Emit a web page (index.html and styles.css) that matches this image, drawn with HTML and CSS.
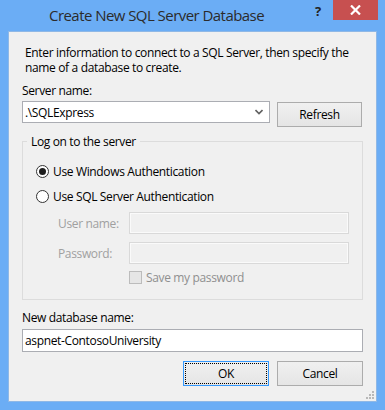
FILE: index.html
```
<!DOCTYPE html>
<html>
<head>
<meta charset="utf-8">
<link rel="stylesheet" href="styles.css">
</head>
<body>
<div class="window">
  <div class="titlebar">
    <div class="title">Create New SQL Server Database</div>
    <div class="help">?</div>
    <div class="close">
      <svg width="11" height="10" viewBox="0 0 11 10"><path d="M1 0.5 L10 9.5 M10 0.5 L1 9.5" stroke="#fff" stroke-width="2.2"/></svg>
    </div>
  </div>
  <div class="client">
    <p class="intro">Enter information to connect to a SQL Server, then specify the name of a database to create.</p>
    <div class="label">Server name:</div>
    <div class="server-row">
      <div class="combo">
        <span>.\SQLExpress</span>
        <svg class="arrow" width="8" height="6" viewBox="0 0 8 6"><path d="M0.5 1 L4 4.5 L7.5 1" fill="none" stroke="#606060" stroke-width="1.6"/></svg>
      </div>
      <div class="btn refresh">Refresh</div>
    </div>
    <fieldset class="group">
      <legend>Log on to the server</legend>
      <div class="radio-row first"><span class="radio checked"></span>Use Windows Authentication</div>
      <div class="radio-row"><span class="radio"></span>Use SQL Server Authentication</div>
      <div class="field-row user"><span class="flabel">User name:</span><span class="dinput"></span></div>
      <div class="field-row"><span class="flabel">Password:</span><span class="dinput"></span></div>
      <div class="check-row"><span class="check"></span>Save my password</div>
    </fieldset>
    <div class="label dblabel">New database name:</div>
    <div class="textbox">aspnet-ContosoUniversity</div>
    <div class="buttons">
      <div class="btn ok"><span class="focus">OK</span></div>
      <div class="btn cancel">Cancel</div>
    </div>
    <div class="grip">
      <svg width="10" height="10" viewBox="0 0 10 10" fill="#b8b8b8"><rect x="7" y="1" width="2" height="2"/><rect x="4" y="4" width="2" height="2"/><rect x="7" y="4" width="2" height="2"/><rect x="1" y="7" width="2" height="2"/><rect x="4" y="7" width="2" height="2"/><rect x="7" y="7" width="2" height="2"/></svg>
    </div>
  </div>
</div>
</body>
</html>
```
FILE: styles.css
```
* { box-sizing: border-box; }
html, body { margin: 0; padding: 0; }
body {
  font-family: "Open Sans", "Noto Sans", sans-serif;
  font-size: 12px;
  color: #000;
}
.window {
  width: 385px;
  height: 410px;
  background: #6badf5;
  display: flex;
  flex-direction: column;
}
.titlebar {
  height: 31px;
  position: relative;
  flex: none;
}
.title {
  position: absolute;
  left: 49px;
  top: 5px;
  font-size: 15px;
  color: #2b2b2b;
  letter-spacing: -0.55px;
}
.help {
  position: absolute;
  left: 315px;
  top: 2px;
  font-size: 13px;
  font-weight: bold;
  color: #222;
}
.close {
  position: absolute;
  left: 333px;
  top: 0;
  width: 45px;
  height: 20px;
  background: #c75050;
  display: flex;
  align-items: center;
  justify-content: center;
}
.client {
  flex: 1;
  margin: 0 8px 8px 8px;
  background: #f0f0f0;
  border: 1px solid #8fb8e6;
  padding: 13px 13px 0 13px;
  position: relative;
  letter-spacing: -0.35px;
}
.intro {
  margin: 0 0 0 3px;
  line-height: 15px;
  width: 335px;
}
.label {
  margin-top: 8px;
  line-height: 15px;
}
.server-row {
  display: flex;
  align-items: flex-start;
  margin-top: 3px;
  gap: 7px;
}
.combo {
  width: 248px;
  height: 22px;
  background: #fff;
  border: 1px solid #abadb3;
  display: flex;
  align-items: center;
  justify-content: space-between;
  padding: 0 6px 0 2px;
}
.btn {
  height: 25px;
  border: 1px solid #acacac;
  background: linear-gradient(#f0f0f0, #e5e5e5);
  display: flex;
  align-items: center;
  justify-content: center;
}
.refresh {
  width: 85px;
  margin-top: 1px;
}
.group {
  margin: 7px 0 0 0;
  border: 1px solid #dcdcdc;
  border-radius: 0;
  padding: 0 0 0 0;
  height: 166px;
  width: 341px;
}
.group legend {
  margin-left: 4px;
  padding: 0 4px;
  line-height: 15px;
}
.radio-row {
  display: flex;
  align-items: center;
  height: 15px;
  margin-left: 13px;
  margin-top: 10px;
}
.radio-row.first { margin-top: 15px; }
.radio {
  width: 13px;
  height: 13px;
  border: 1px solid #333;
  border-radius: 50%;
  background: #fff;
  margin-right: 4px;
  display: flex;
  align-items: center;
  justify-content: center;
}
.radio.checked::after {
  content: "";
  width: 7px;
  height: 7px;
  border-radius: 50%;
  background: #1e1e1e;
}
.field-row {
  display: flex;
  align-items: center;
  margin-left: 35px;
  margin-top: 8px;
  color: #a0a0a0;
}
.field-row.user { margin-top: 8px; }
.flabel { width: 71px; }
.dinput {
  width: 220px;
  height: 22px;
  border: 1px solid #d9d9d9;
  box-shadow: inset 0 0 0 1px #fafafa;
  background: #f0f0f0;
}
.check-row {
  display: flex;
  align-items: center;
  margin-left: 106px;
  margin-top: 5px;
  color: #8f8f8f;
}
.check {
  width: 13px;
  height: 13px;
  border: 1px solid #bcbcbc;
  background: #e6e6e6;
  margin-right: 4px;
}
.dblabel { margin-top: 10px; }
.textbox {
  margin-top: 4px;
  width: 341px;
  height: 23px;
  background: #fff;
  border: 1px solid #abadb3;
  padding: 0 2px;
  display: flex;
  align-items: center;
}
.buttons {
  display: flex;
  justify-content: flex-end;
  gap: 8px;
  margin-top: 9px;
  width: 341px;
}
.ok {
  width: 86px;
  border-color: #3399ff;
  padding: 1px;
}
.ok .focus {
  flex: 1;
  align-self: stretch;
  border: 1px dotted #000;
  display: flex;
  align-items: center;
  justify-content: center;
}
.cancel { width: 86px; }
.grip {
  position: absolute;
  right: 1px;
  bottom: 1px;
  width: 10px;
  height: 10px;
  line-height: 0;
}
```
